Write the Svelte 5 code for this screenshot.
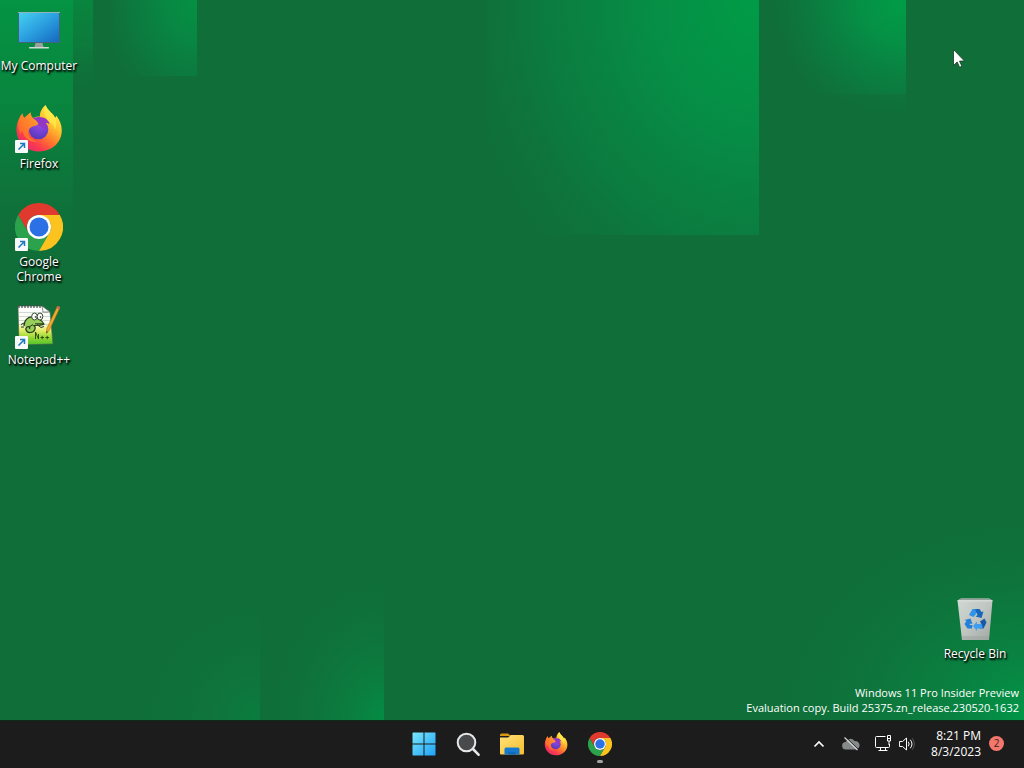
<script>
  const shortcuts = [
    { name: 'My Computer', icon: 'computer', linked: false },
    { name: 'Firefox', icon: 'firefox', linked: true },
    { name: 'Google Chrome', icon: 'chrome', linked: true },
    { name: 'Notepad++', icon: 'notepad', linked: true }
  ];
  const pinned = [
    { name: 'Start', icon: 'start' },
    { name: 'Search', icon: 'search' },
    { name: 'File Explorer', icon: 'explorer' },
    { name: 'Firefox', icon: 'firefox' },
    { name: 'Google Chrome', icon: 'chrome', running: true }
  ];
</script>

<svg class="defs" aria-hidden="true">
  <defs>
    <linearGradient id="screen" x1="0" y1="0" x2="1" y2="1">
      <stop offset="0" stop-color="#45d0ee" /><stop offset=".5" stop-color="#2b9fe0" /><stop offset="1" stop-color="#1568be" />
    </linearGradient>
    <linearGradient id="fox" x1=".85" y1=".1" x2=".2" y2=".95">
      <stop offset="0" stop-color="#fff04a" /><stop offset=".3" stop-color="#ffbd2e" /><stop offset=".55" stop-color="#ff7a2c" /><stop offset=".8" stop-color="#fb3a4e" /><stop offset="1" stop-color="#e52a72" />
    </linearGradient>
    <linearGradient id="foxhead" x1="0" y1="1" x2="1" y2="0">
      <stop offset="0" stop-color="#ff5a2c" /><stop offset="1" stop-color="#ffa42b" />
    </linearGradient>
    <radialGradient id="globe" cx=".6" cy=".2" r=".9">
      <stop offset="0" stop-color="#a04be0" /><stop offset=".6" stop-color="#6b3fd0" /><stop offset="1" stop-color="#4b3aa8" />
    </radialGradient>
    <linearGradient id="paper" x1="0" y1="0" x2="0" y2="1">
      <stop offset="0" stop-color="#ffffff" /><stop offset=".42" stop-color="#fbfdf0" /><stop offset=".62" stop-color="#e3ee6a" /><stop offset=".8" stop-color="#9ad835" /><stop offset="1" stop-color="#4fc32b" />
    </linearGradient>
    <linearGradient id="bin" x1="0" y1="0" x2="1" y2="1">
      <stop offset="0" stop-color="#d2d8d4" /><stop offset=".5" stop-color="#c0c6c2" /><stop offset="1" stop-color="#a0a6a2" />
    </linearGradient>
    <linearGradient id="win" gradientUnits="userSpaceOnUse" x1="0" y1="0" x2="24" y2="24">
      <stop offset="0" stop-color="#7be7ff" /><stop offset="1" stop-color="#1ba1f5" />
    </linearGradient>
    <linearGradient id="folder" x1="0" y1="0" x2="1" y2="1">
      <stop offset="0" stop-color="#ffe27a" /><stop offset="1" stop-color="#f6bd2c" />
    </linearGradient>
  </defs>

  <symbol id="computer" viewBox="0 0 48 48">
    <rect x="3" y="5" width="42" height="31" rx="1" fill="#41667a" />
    <rect x="3" y="5" width="42" height="1" fill="#8fb3b8" />
    <rect x="4" y="6" width="40" height="29" fill="url(#screen)" />
    <path d="M20.500 36h7l1 4h-9z" fill="#9aa29f" />
    <rect x="14" y="40" width="20" height="1.500" rx=".5" fill="#d3d9d6" />
  </symbol>

  <symbol id="firefox" viewBox="0 0 48 48">
    <path d="M30.500 0c1.500 4 4.500 6.300 7.300 9.300 1 1.200 1.700 2.500 2.200 3.800l1.500-2.300c3.300 4.500 5.300 9.200 5.300 14.500C46.800 37.500 37 46.500 24 46.500S1.500 37 1.500 24.500C1.500 18.500 4 12.500 7.500 8.500c.3 1.800.8 3.300 1.700 4.500L15.500 7.500c.2 2.500 1 4.500 2.500 5.500 2-1.300 4.600-1.800 7-1.500C24.500 7.500 27 3 30.500 0z" fill="url(#fox)" />
    <circle cx="23.500" cy="24.500" r="9.800" fill="url(#globe)" />
    <path d="M16 14.500c3.500-2.800 9-3.500 13.500-1.400 2.500 1.200 4.500 3.300 5 6-1.300-1-2.500-1.300-4-1.200 2 2.800 1.500 5.200-.5 6.400-4-1.400-6-5.500-14-8z" fill="#9236c5" />
    <path d="M7.500 8.500c.3 1.800.8 3.300 1.700 4.500L15.500 7.500c.2 2.500 1 4.600 3 6.300 2 .9 3.700 2.700 5 5-1.500 2-4.500 2-6.500 3-2.500 1.300-4 3.500-3.800 6.500.4 4 4 7.500 9 8-6 2-14-3-14.700-10.500-1.200 1-1.600 2-1.500 4C2.500 24 2.500 13.500 7.500 8.500z" fill="url(#foxhead)" />
    <path d="M30.500 0c1.500 4 4.500 6.300 7.300 9.300C42 14 42 20 40 25c-.5-5-4-7-6-8.500-4.500-3.500-6-10-3.500-16.500z" fill="#fff04a" opacity=".65" />
  </symbol>

  <symbol id="chrome" viewBox="0 0 48 48">
    <path d="M3.200 12A24 24 0 0 1 44.800 12H24A12 12 0 0 0 13.600 30z" fill="#e0392d" />
    <path d="M3.200 12A24 24 0 0 0 24 48L34.400 30A12 12 0 0 1 13.600 30z" fill="#2ba24c" />
    <path d="M44.800 12A24 24 0 0 1 24 48L34.400 30A12 12 0 0 0 34.400 18L24 12z" fill="#fcc31e" />
    <circle cx="24" cy="24" r="12" fill="#fff" />
    <circle cx="24" cy="24" r="9.500" fill="#2b70e4" />
  </symbol>

  <symbol id="notepad" viewBox="0 0 48 48">
    <path d="M3 5h24l8 6 3 32-34 1z" fill="url(#paper)" stroke="#47584c" stroke-width=".6" />
    <path d="M4 11.500h29M4 15.500h31M4 19.500h31M4 23.500h31" stroke="#c3d2c8" stroke-width=".8" />
    <path d="M27 5l1 6h7z" fill="#fff" stroke="#526158" stroke-width=".7" />
    <path d="M4 4v3M7 4v3M10 4v3M13 4v3M16 4v3M19 4v3M22 4v3M25 4v3" stroke="#424b46" stroke-width="1.200" />
    <path d="M9 25c0-6 4-9.500 9-9 5 .5 9 4 11 7-2 1.500-6 1-10 1.500 2 1.500 1.500 6.500-3.500 7-4 .4-6-3.500-3.500-5.500 2-1 3.500.5 2.500 2" fill="#98cf5a" stroke="#26381c" stroke-width="1.200" />
    <path d="M18 23.500l-4 2.500M22 23.500l4 3 3-1M9 22l-3 1.500M6 26h3M20 22.800h8" fill="none" stroke="#26381c" />
    <ellipse cx="19.500" cy="15.500" rx="2.800" ry="3.500" fill="#fff" stroke="#26381c" stroke-width=".9" />
    <ellipse cx="25" cy="15.500" rx="2.800" ry="3.500" fill="#fff" stroke="#26381c" stroke-width=".9" />
    <circle cx="20.500" cy="16" r=".8" fill="#111" /><circle cx="25.500" cy="16" r=".8" fill="#111" />
    <path d="M20.500 38v-7l3 7v-5M25.500 36.500h3.500M27.200 34.800v3.500M30.500 36.500H34M32.200 34.800v3.500" fill="none" stroke="#24440e" stroke-width=".9" />
    <path d="M42.500 5l2.600 1.300L34.500 29 31.500 32.500 31.800 27.500z" fill="#f0a92c" stroke="#986017" stroke-width=".5" />
    <path d="M42.500 5l2.600 1.300-1 2.200-2.700-1.300z" fill="#c96a58" />
    <path d="M31.700 30l1 .8-1.200 1.700z" fill="#2b2315" />
  </symbol>

  <symbol id="bin-icon" viewBox="0 0 48 48">
    <path d="M6.500 5.500L10 3.500h28l3.500 2L38 45H11z" fill="url(#bin)" />
    <path d="M6.500 5.500L10 3.500h28l3.500 2z" fill="#93a099" />
    <path d="M6.500 5.800h35" stroke="#e4e9e6" />
    <path d="M11 41l.3 4h26.500l.4-4z" fill="#9ca29e" opacity=".5" />
    <path d="M18 20l3.500-6h6l-2.500 5-2.500 3z" fill="#2f93e8" />
    <path d="M24 14h4.500l2 3 2-.5-2 6.500-6-1.500 2-1.500z" fill="#1766bd" />
    <path d="M33.500 23.500l2 4-3 6h-4l2-4-1.500-3z" fill="#195aa8" />
    <path d="M32 33.500h-6v2.500l-4-5 4-4.500V29h4.500z" fill="#3d9df0" />
    <path d="M21 33.500h-4.500L13.500 29l2-3-2-1 6-1.500 2 5.500-2-.5-1 1.500h3z" fill="#2480dc" />
  </symbol>

  <symbol id="start" viewBox="0 0 24 24">
    <path d="M1 .5h10.500V11.500H.5V1zM12.500 .5H23l.5.5v10.500h-11zM.5 12.500h11v11H1l-.5-.5zM12.500 12.500h11V23l-.5.500H12.500z" fill="url(#win)" />
  </symbol>

  <symbol id="search" viewBox="0 0 24 24">
    <circle cx="10.500" cy="10.500" r="8.800" fill="#484a4c" stroke="#e6e7e8" stroke-width="2" />
    <path d="M17 17l5.500 5.700" stroke="#e6e7e8" stroke-width="2.600" stroke-linecap="round" />
  </symbol>

  <symbol id="explorer" viewBox="0 0 24 24">
    <path d="M0 3q0-1.500 1.500-1.500H8L11 4H0z" fill="#d99a12" />
    <path d="M0 5.500h8L11 3h11.500Q24 3 24 4.500v17q0 1-1 1H1q-1 0-1-1z" fill="url(#folder)" />
    <path d="M4.500 22.500V17q0-1.500 1.500-1.500h12Q19.500 15.500 19.500 17v5.500z" fill="#1579cf" />
    <path d="M8.500 22.500v-2.500h7v2.500z" fill="#106bb5" />
  </symbol>
</svg>

<div class="screen">
  <main class="desktop">
    <svg class="wallpaper" viewBox="0 0 1024 720" preserveAspectRatio="none" aria-hidden="true">
      <defs>
        <radialGradient id="glow" cx="1" cy="0" r="1">
          <stop offset="0" stop-color="#00a046" /><stop offset=".35" stop-color="#059245" stop-opacity=".85" /><stop offset=".7" stop-color="#098242" stop-opacity=".42" /><stop offset="1" stop-color="#0b793e" stop-opacity="0" />
        </radialGradient>
        <radialGradient id="tall" cx="1" cy="0" r="1.100" gradientTransform="scale(1 1.350)">
          <stop offset="0" stop-color="#009c46" /><stop offset=".35" stop-color="#049348" stop-opacity=".88" /><stop offset=".7" stop-color="#098242" stop-opacity=".7" /><stop offset="1" stop-color="#0b793e" stop-opacity="0" />
        </radialGradient>
        <radialGradient id="rise" cx="1" cy="1" r="1">
          <stop offset="0" stop-color="#009648" /><stop offset=".4" stop-color="#098442" stop-opacity=".7" /><stop offset="1" stop-color="#0b763c" stop-opacity="0" />
        </radialGradient>
        <linearGradient id="left" x1="0" y1="0" x2="0" y2="1">
          <stop offset="0" stop-color="#049443" /><stop offset=".5" stop-color="#08883f" stop-opacity=".8" /><stop offset="1" stop-color="#0b763c" stop-opacity="0" />
        </linearGradient>
      </defs>
      <rect width="73" height="240" fill="url(#left)" />
      <rect x="73" width="20" height="90" fill="url(#left)" opacity=".6" />
      <rect x="110" width="87" height="76" fill="url(#tall)" opacity=".75" />
      <rect x="486" width="273" height="235" fill="url(#tall)" />
      <rect x="770" width="136" height="116" fill="url(#glow)" />
      <rect x="790" width="116" height="94" fill="url(#tall)" opacity=".6" />
      <rect x="140" y="600" width="120" height="120" fill="url(#rise)" opacity=".35" />
      <rect x="270" y="580" width="114" height="140" fill="url(#rise)" opacity=".75" />
      <rect x="780" y="520" width="244" height="200" fill="url(#rise)" />
      <rect x="900" y="563" width="124" height="157" fill="url(#rise)" opacity=".6" />
    </svg>

    <nav class="shortcuts" aria-label="Desktop">
      {#each shortcuts as item}
        <button class="shortcut">
          <span class="picture">
            <svg class="large" aria-hidden="true"><use href="#{item.icon}" /></svg>
            {#if item.linked}
              <svg class="arrow" viewBox="0 0 13 13" aria-hidden="true">
                <rect width="13" height="13" rx="1" fill="#f7f9fa" />
                <path d="M3.500 9.500L9 4M5 3.500h4.500V8" fill="none" stroke="#1c78bd" stroke-width="1.500" />
              </svg>
            {/if}
          </span>
          <span>{item.name}</span>
        </button>
      {/each}
    </nav>

    <div class="corner">
      <button class="shortcut recycle">
        <svg class="large" aria-hidden="true"><use href="#bin-icon" /></svg>
        <span>Recycle Bin</span>
      </button>
      <p class="build">Windows 11 Pro Insider Preview<br />Evaluation copy. Build 25375.zn_release.230520-1632</p>
    </div>

    <svg class="cursor" viewBox="0 0 12 19" aria-hidden="true">
      <path d="M.5.5v16l3.700-3.500 2.400 5.300 2.300-1-2.400-5.200h5z" fill="#fff" stroke="#143a22" stroke-width=".8" />
    </svg>
  </main>

  <footer class="taskbar">
    <div class="pinned">
      {#each pinned as app}
        <button class="app" class:running={app.running} aria-label={app.name}>
          <svg class="small" aria-hidden="true"><use href="#{app.icon}" /></svg>
        </button>
      {/each}
    </div>

    <div class="tray">
      <button aria-label="Show hidden icons">
        <svg width="12" height="8" viewBox="0 0 12 8"><path d="M1.500 6.500L6 2l4.500 4.500" fill="none" stroke="#fff" stroke-width="1.600" /></svg>
      </button>
      <button class="cloud" aria-label="OneDrive">
        <svg width="18" height="16" viewBox="0 0 18 16">
          <path d="M4 13.500a3.700 3.700 0 0 1-.3-7.400A5 5 0 0 1 12.500 5a4.300 4.300 0 0 1 1.500 8.500z" fill="#85898a" />
          <path d="M3.500 1l13 12.500" stroke="#1c1c1c" /><path d="M2.500 1.500l13 12.500" stroke="#d5d7d7" stroke-width="1.200" />
        </svg>
      </button>
      <button class="system" aria-label="Network and volume">
        <svg width="17" height="17" viewBox="0 0 17 17" fill="none" stroke="#fff">
          <path d="M10.500 1.500h-9q-1 0-1 1v9q0 1 1 1h12q1 0 1-1V9M5.500 12.500v3M10.500 12.500v3M3.500 15.500h9" />
          <path d="M12.500 .5h3V6h-3zM12.500 3.500h3M14 6v4" />
        </svg>
        <svg width="16" height="16" viewBox="0 0 16 16" fill="none" stroke="#fff" stroke-linecap="round">
          <path d="M.8 5.500h2.700L7.500 2v12l-4-3.500H.8z" stroke-linejoin="round" />
          <path d="M9.500 6q1.600 2 0 4M11.500 4q3.200 4 0 8" /><path d="M13.500 2.500q4 5.500 0 11" opacity=".25" />
        </svg>
      </button>
      <button class="clock"><time>8:21 PM<br />8/3/2023</time></button>
      <button class="badge" aria-label="2 notifications">2</button>
    </div>
  </footer>
</div>

<style>
  :global(body) {
    margin: 0;
    background: #106f39;
  }
  .defs {
    position: absolute;
    width: 0;
    height: 0;
  }
  .screen {
    display: flex;
    flex-direction: column;
    min-height: 100vh;
    font: 12px/15px "Open Sans", "Noto Sans", sans-serif;
    color: #fff;
  }
  button {
    margin: 0;
    padding: 0;
    border: 0;
    background: none;
    color: inherit;
    font: inherit;
  }
  svg {
    display: block;
  }
  .desktop {
    position: relative;
    flex: 1;
    display: flex;
    justify-content: space-between;
    background: #106f39;
  }
  .wallpaper {
    position: absolute;
    inset: 0;
    width: 100%;
    height: 100%;
  }
  .shortcuts {
    position: relative;
    display: flex;
    flex-direction: column;
    padding-top: 7px;
  }
  .shortcut {
    display: flex;
    flex-direction: column;
    align-items: center;
    gap: 3px;
    width: 78px;
    height: 98px;
    text-align: center;
    text-shadow: 1px 1px 2px #000, 1px 2px 2px #000;
  }
  .picture {
    position: relative;
  }
  .large {
    width: 48px;
    height: 48px;
  }
  .arrow {
    position: absolute;
    left: 0;
    bottom: 0;
    width: 13px;
    height: 13px;
  }
  .corner {
    position: relative;
    display: flex;
    flex-direction: column;
    justify-content: flex-end;
    align-items: flex-end;
  }
  .recycle {
    height: auto;
    margin: 0 10px 24px 0;
  }
  .build {
    margin: 0;
    padding: 0 5px 5px 0;
    font-size: 11px;
    text-align: right;
  }
  .cursor {
    position: absolute;
    top: 49px;
    right: 59px;
    width: 12px;
    height: 19px;
  }
  .taskbar {
    display: grid;
    grid-template-columns: 1fr auto 1fr;
    box-sizing: border-box;
    height: 48px;
    padding-bottom: 2px;
    background: #1c1c1c;
    border-top: 1px solid #0c2c1a;
  }
  .pinned {
    grid-column: 2;
    display: flex;
  }
  .app {
    position: relative;
    display: grid;
    place-items: center;
    width: 44px;
  }
  .small {
    width: 24px;
    height: 24px;
  }
  .running::after {
    content: "";
    position: absolute;
    bottom: 3px;
    left: 19px;
    width: 6px;
    height: 3px;
    border-radius: 2px;
    background: #a2a5a7;
  }
  .tray {
    display: flex;
    justify-content: flex-end;
    align-items: center;
    padding-right: 20px;
  }
  .cloud {
    margin: 0 15px 0 17px;
  }
  .system {
    display: flex;
    align-items: center;
    gap: 7px;
  }
  .clock {
    margin: 0 8px 0 16px;
    line-height: 16px;
    text-align: right;
  }
  .badge {
    width: 15px;
    height: 15px;
    border-radius: 50%;
    background: #f4776b;
    color: #35201e;
    font-size: 10px;
    line-height: 15px;
  }
</style>
